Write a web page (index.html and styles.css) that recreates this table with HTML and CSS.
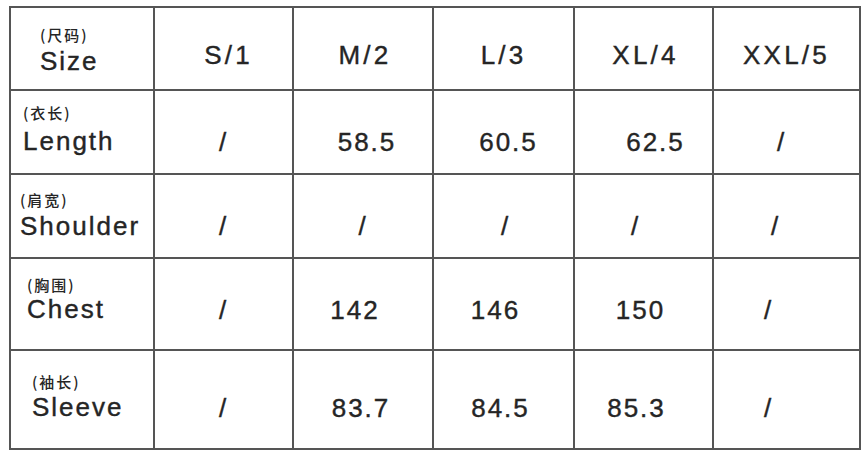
FILE: index.html
```html
<!DOCTYPE html>
<html lang="zh">
<head>
<meta charset="utf-8">
<title>Size chart</title>
<link rel="stylesheet" href="styles.css">
</head>
<body>
<div class="chart">
  <div class="row r1">
    <div class="cell label lb1"><span class="zh">(尺码)</span><span class="en">Size</span></div>
    <div class="cell val head dx-p5">S/1</div>
    <div class="cell val head dx-p2">M/2</div>
    <div class="cell val head">L/3</div>
    <div class="cell val head dx-p2">XL/4</div>
    <div class="cell val head">XXL/5</div>
  </div>
  <div class="row r2">
    <div class="cell label lb2"><span class="zh">(衣长)</span><span class="en">Length</span></div>
    <div class="cell val">/</div>
    <div class="cell val dx-p4">58.5</div>
    <div class="cell val dx-p5">60.5</div>
    <div class="cell val dx-p12">62.5</div>
    <div class="cell val dx-m5">/</div>
  </div>
  <div class="row r3">
    <div class="cell label lb3"><span class="zh">(肩宽)</span><span class="en">Shoulder</span></div>
    <div class="cell val">/</div>
    <div class="cell val">/</div>
    <div class="cell val dx-p2">/</div>
    <div class="cell val dx-m8">/</div>
    <div class="cell val dx-m11">/</div>
  </div>
  <div class="row r4">
    <div class="cell label lb4"><span class="zh">(胸围)</span><span class="en">Chest</span></div>
    <div class="cell val">/</div>
    <div class="cell val dx-m8">142</div>
    <div class="cell val dx-m8">146</div>
    <div class="cell val dx-m3">150</div>
    <div class="cell val dx-m18">/</div>
  </div>
  <div class="row r5">
    <div class="cell label lb5"><span class="zh">(袖长)</span><span class="en">Sleeve</span></div>
    <div class="cell val">/</div>
    <div class="cell val dx-m2">83.7</div>
    <div class="cell val dx-m3">84.5</div>
    <div class="cell val dx-m7">85.3</div>
    <div class="cell val dx-m18">/</div>
  </div>
</div>
</body>
</html>
```

FILE: styles.css
```css
html, body {
  margin: 0;
  padding: 0;
  background: #ffffff;
}

body {
  font-family: "Liberation Sans", Arial, sans-serif;
  color: #252525;
}

.chart {
  margin: 6px 0 0 9px;
  width: 852px;
  box-sizing: border-box;
  display: grid;
  grid-template-columns: 142px 137px 138px 139px 137px 145px;
  grid-template-rows: 81px 82px 82px 90px 97px;
  gap: 2px;
  padding: 2px;
  background: #555555;
}

.row {
  display: contents;
}

.cell {
  background: #ffffff;
  box-sizing: border-box;
}

.val {
  display: flex;
  align-items: center;
  justify-content: center;
  font-size: 26px;
  letter-spacing: 2px;
  line-height: 28px;
  -webkit-text-stroke: 0.4px #252525;
}

.head {
  font-size: 26px;
  letter-spacing: 3.2px;
}

.r1 .val { padding-top: 12px; }
.r2 .val { padding-top: 20px; }
.r3 .val { padding-top: 20px; }
.r4 .val { padding-top: 12px; }
.r5 .val { padding-top: 16px; }

.dx-p2 { padding-left: 4px; }
.dx-p4 { padding-left: 8px; }
.dx-p5 { padding-left: 10px; }
.dx-p12 { padding-left: 24px; }
.dx-m2 { padding-right: 4px; }
.dx-m3 { padding-right: 6px; }
.dx-m5 { padding-right: 10px; }
.dx-m7 { padding-right: 14px; }
.dx-m8 { padding-right: 16px; }
.dx-m11 { padding-right: 22px; }
.dx-m18 { padding-right: 36px; }

.label {
  display: flex;
  flex-direction: column;
  align-items: flex-start;
}

.zh {
  font-family: "Noto Sans CJK SC", "Liberation Sans", sans-serif;
  font-size: 15px;
  font-weight: 500;
  line-height: 18px;
  letter-spacing: 2px;
}

.en {
  font-size: 26px;
  line-height: 28px;
  letter-spacing: 2px;
  -webkit-text-stroke: 0.4px #252525;
}

.lb1 { padding: 18px 0 0 29px; }
.lb1 .en { margin-top: 3px; }
.lb2 { padding: 13px 0 0 12px; }
.lb2 .en { margin-top: 5px; }
.lb3 { padding: 16px 0 0 9px; }
.lb3 .en { margin-top: 3px; }
.lb4 { padding: 17px 0 0 16px; }
.lb4 .en { margin-top: 1px; }
.lb5 { padding: 22px 0 0 21px; }
.lb5 .en { margin-top: 2px; }
```
